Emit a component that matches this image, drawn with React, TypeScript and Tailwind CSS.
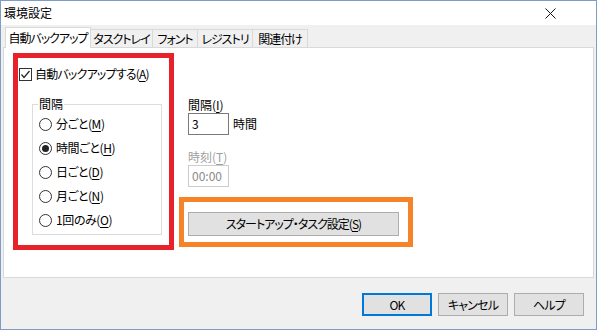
import React from "react";

const Radio = ({ checked, children }: { checked?: boolean; children: React.ReactNode }) => (
  <div className="flex h-[24px] items-center">
    <span className="flex h-[13px] w-[13px] items-center justify-center rounded-full border border-[#333333] bg-white">
      {checked && <span className="h-[7px] w-[7px] rounded-full bg-[#222222]" />}
    </span>
    <span className="ml-[4px] whitespace-nowrap tracking-[-0.4px]">{children}</span>
  </div>
);

const Btn = ({ children, primary }: { children: React.ReactNode; primary?: boolean }) => (
  <div
    className={
      "flex h-[23px] w-[70px] items-center justify-center whitespace-nowrap bg-[#e1e1e1] tracking-[-0.8px] " +
      (primary ? "border-2 border-[#0078d7]" : "border border-[#adadad]")
    }
  >
    {children}
  </div>
);

const Tab = ({ children, w }: { children: React.ReactNode; w: string }) => (
  <div
    className={
      "-ml-px flex h-[18px] items-center justify-center whitespace-nowrap border border-b-0 border-[#d9d9d9] bg-[#f0f0f0] tracking-[-1px] " +
      w
    }
  >
    {children}
  </div>
);

export default function App() {
  return (
    <div className="h-[332px] w-[599px] bg-white font-['Noto_Sans_CJK_JP','Noto_Sans',sans-serif] text-[12px] leading-[16px] text-black [font-feature-settings:'palt']">
      <div className="flex h-[330px] w-[597px] flex-col border border-[#7f9dc4] bg-[#f0f0f0]">
        {/* title bar */}
        <div className="flex h-[24px] items-center justify-between bg-white">
          <span className="ml-[3px]">環境設定</span>
          <svg width="11" height="11" viewBox="0 0 11 11" className="mr-[40px]">
            <path d="M0.5 0.5 L10.5 10.5 M10.5 0.5 L0.5 10.5" stroke="#111" strokeWidth="1" />
          </svg>
        </div>
        {/* tabs */}
        <div className="ml-[4px] mt-[2px] flex h-[20px] items-end">
          <div className="relative z-10 -mb-px flex h-[21px] w-[86px] items-center justify-center whitespace-nowrap border border-b-0 border-[#d9d9d9] bg-white tracking-[-1px]">
            自動バックアップ
          </div>
          <Tab w="w-[63px]">タスクトレイ</Tab>
          <Tab w="w-[46px]">フォント</Tab>
          <Tab w="w-[56px]">レジストリ</Tab>
          <Tab w="w-[56px]">関連付け</Tab>
        </div>
        {/* panel */}
        <div className="mx-[2px] flex h-[231px] border border-[#d9d9d9] bg-white pl-[9px] pt-[5px]">
          {/* red annotated area */}
          <div className="h-[197px] w-[161px] border-[5px] border-[#e8222a]">
            <div className="ml-[1px] mt-[8px] flex h-[16px] items-center">
              <span className="flex h-[13px] w-[13px] items-center justify-center border border-[#333333] bg-white">
                <svg width="11" height="11" viewBox="0 0 11 11">
                  <path d="M1.5 5.5 L4 8.5 L9.5 2" stroke="#222" strokeWidth="1.2" fill="none" />
                </svg>
              </span>
              <span className="ml-[3px] whitespace-nowrap tracking-[-0.8px]">
                自動バックアップする(<u className="underline-offset-2">A</u>)
              </span>
            </div>
            <fieldset className="ml-[14px] mt-[14px] h-[139px] w-[130px] border border-[#dcdcdc] pl-[6px]">
              <legend className="-ml-px px-px leading-[16px]">間隔</legend>
              <Radio>
                分ごと(<u className="underline-offset-2">M</u>)
              </Radio>
              <Radio checked>
                時間ごと(<u className="underline-offset-2">H</u>)
              </Radio>
              <Radio>
                日ごと(<u className="underline-offset-2">D</u>)
              </Radio>
              <Radio>
                月ごと(<u className="underline-offset-2">N</u>)
              </Radio>
              <Radio>
                1回のみ(<u className="underline-offset-2">O</u>)
              </Radio>
            </fieldset>
          </div>
          {/* right column */}
          <div className="ml-[5px] flex flex-col">
            <div className="ml-[9px] mt-[44px] flex flex-col">
              <span>
                間隔(<u className="underline-offset-2">I</u>)
              </span>
              <div className="flex items-center">
                <div className="flex h-[22px] w-[41px] items-center border border-[#7a7a7a] bg-white pl-[3px]">3</div>
                <span className="ml-[4px]">時間</span>
              </div>
              <span className="mt-[14px] text-[#a0a0a0]">
                時刻(<u className="underline-offset-2">T</u>)
              </span>
              <div className="flex h-[22px] w-[41px] items-center border border-[#cccccc] bg-white pl-[3px] text-[#8a8a8a]">
                00:00
              </div>
            </div>
            {/* orange annotated area */}
            <div className="mt-[10px] h-[50px] w-[234px] border-[5px] border-[#f5832a] pl-[4px] pt-[10px]">
              <div className="flex h-[24px] w-[211px] items-center justify-center whitespace-nowrap border border-[#adadad] bg-[#e1e1e1] tracking-[-1px]">
                スタートアップ・タスク設定(<u className="underline-offset-2">S</u>)
              </div>
            </div>
          </div>
        </div>
        {/* buttons */}
        <div className="mt-[15px] flex justify-end gap-[6px] pr-[12px]">
          <Btn primary>OK</Btn>
          <Btn>キャンセル</Btn>
          <Btn>ヘルプ</Btn>
        </div>
      </div>
    </div>
  );
}
